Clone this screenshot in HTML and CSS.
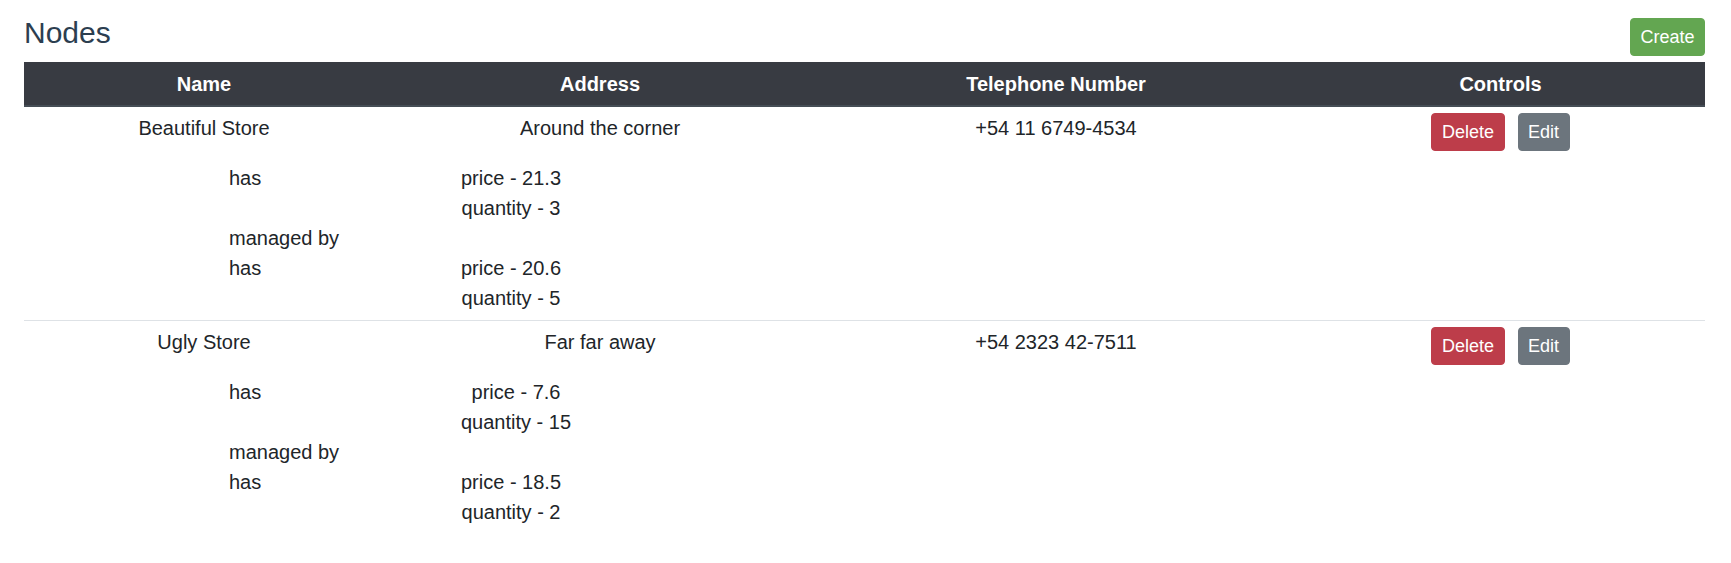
FILE: index.html
```html
<!DOCTYPE html>
<html lang="en">
<head>
<meta charset="utf-8">
<title>Nodes</title>
<link rel="stylesheet" href="styles.css">
</head>
<body>
<div class="page">
  <header class="page-head">
    <h1 class="title">Nodes</h1>
    <button class="btn btn-create" type="button">Create</button>
  </header>
  <table class="nodes">
    <colgroup>
      <col class="c-name">
      <col class="c-addr">
      <col class="c-tel">
      <col class="c-ctrl">
    </colgroup>
    <thead>
      <tr><th>Name</th><th>Address</th><th>Telephone Number</th><th>Controls</th></tr>
    </thead>
    <tbody class="node">
      <tr class="main">
        <td>Beautiful Store</td>
        <td>Around the corner</td>
        <td>+54 11 6749-4534</td>
        <td><div class="controls"><button class="btn btn-delete" type="button">Delete</button><button class="btn btn-edit" type="button">Edit</button></div></td>
      </tr>
      <tr class="rels">
        <td colspan="4">
          <div class="rel-grid">
            <div class="rel-label">has</div>
            <div class="props"><div>price - 21.3</div><div>quantity - 3</div></div>
            <div class="rel-label">managed by</div>
            <div class="props"></div>
            <div class="rel-label">has</div>
            <div class="props"><div>price - 20.6</div><div>quantity - 5</div></div>
          </div>
        </td>
      </tr>
    </tbody>
    <tbody class="node">
      <tr class="main">
        <td>Ugly Store</td>
        <td>Far far away</td>
        <td>+54 2323 42-7511</td>
        <td><div class="controls"><button class="btn btn-delete" type="button">Delete</button><button class="btn btn-edit" type="button">Edit</button></div></td>
      </tr>
      <tr class="rels">
        <td colspan="4">
          <div class="rel-grid">
            <div class="rel-label">has</div>
            <div class="props"><div>price - 7.6</div><div>quantity - 15</div></div>
            <div class="rel-label">managed by</div>
            <div class="props"></div>
            <div class="rel-label">has</div>
            <div class="props"><div>price - 18.5</div><div>quantity - 2</div></div>
          </div>
        </td>
      </tr>
    </tbody>
  </table>
</div>
</body>
</html>
```

FILE: styles.css
```css
* { box-sizing: border-box; }

html, body {
  margin: 0;
  padding: 0;
  background: #ffffff;
}

body {
  font-family: "Liberation Sans", Arial, Helvetica, sans-serif;
  color: #212529;
}

.page {
  padding: 15px 26px 0 24px;
}

.page-head {
  display: flex;
  justify-content: space-between;
  align-items: flex-start;
}

.title {
  margin: 0;
  font-size: 30px;
  line-height: 36px;
  font-weight: 400;
  color: #2c3e50;
}

.btn {
  display: inline-block;
  font-family: inherit;
  font-size: 18px;
  line-height: 24px;
  padding: 6px 9.5px;
  border: 1px solid transparent;
  border-radius: 4px;
  color: #ffffff;
  cursor: pointer;
}

.btn-create {
  margin-top: 3px;
  background: #63a651;
  border-color: #63a651;
}

.btn-delete {
  background: #bd3d4a;
  border-color: #bd3d4a;
}

.btn-edit {
  background: #6c757d;
  border-color: #6c757d;
}

.nodes {
  width: 100%;
  margin-top: 6px;
  border-collapse: collapse;
  table-layout: fixed;
  font-size: 20px;
  line-height: 30px;
}

.c-name { width: 360px; }
.c-addr { width: 432px; }
.c-tel  { width: 480px; }
.c-ctrl { width: 409px; }

.nodes th {
  background: #383b42;
  color: #ffffff;
  font-weight: 700;
  text-align: center;
  padding: 7px 6px 6px;
  border-bottom: 2px solid #454d55;
}

.nodes td {
  padding: 6px;
  vertical-align: top;
  text-align: center;
}

.node + .node .main td {
  border-top: 1px solid #dee2e6;
}

.controls {
  display: flex;
  justify-content: center;
  gap: 13px;
}

.nodes .rels td {
  text-align: left;
  padding: 6px 6px 7px 205px;
}

.rel-grid {
  display: grid;
  grid-template-columns: 232px auto;
  justify-items: start;
}

.rel-label {
  min-height: 30px;
}

.props {
  text-align: center;
}
```
